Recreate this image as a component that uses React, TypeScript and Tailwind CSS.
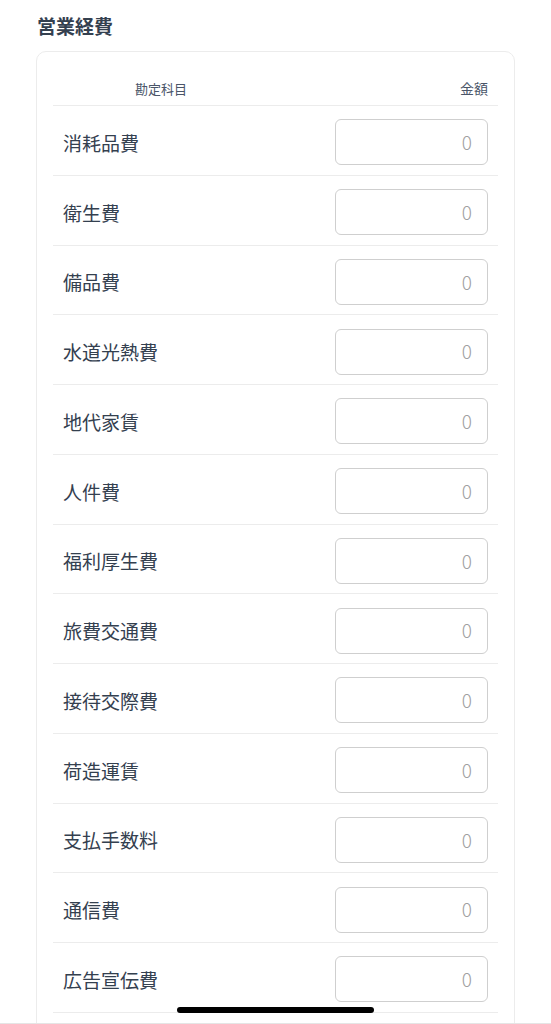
const items = [
  "消耗品費",
  "衛生費",
  "備品費",
  "水道光熱費",
  "地代家賃",
  "人件費",
  "福利厚生費",
  "旅費交通費",
  "接待交際費",
  "荷造運賃",
  "支払手数料",
  "通信費",
  "広告宣伝費",
];

export default function App() {
  return (
    <div
      className="relative h-[1024px] w-full overflow-hidden bg-white text-[#34404f]"
      style={{ fontFamily: '"Noto Sans CJK JP", "Noto Sans", sans-serif' }}
    >
      <h2 className="pl-[37px] pt-[12px] text-[19px] font-bold leading-[28px]">営業経費</h2>

      <div className="mx-[36px] mt-[11px] h-[1000px] rounded-t-[10px] border border-[#ececec] px-[16px]">
        <div className="flex h-[54px] items-center border-b border-[#ececec] pt-[20px] text-[13px] text-[#4a5568]">
          <span className="pl-[82px]">勘定科目</span>
          <span className="ml-auto pr-[10px] text-[14px]">金額</span>
        </div>

        {items.map((name) => (
          <div key={name} className="flex h-[69.75px] items-center border-b border-[#ececec] pl-[10px] pr-[10px] pt-[4px]">
            <span className="text-[19px] leading-none">{name}</span>
            <div className="ml-auto flex h-[46px] w-[153px] items-center justify-end rounded-[6px] border border-[#cfcfcf] pr-[15px] text-[19px] font-light text-[#a0a0a0]">
              0
            </div>
          </div>
        ))}
      </div>

      <div className="absolute left-0 right-0 top-[1023px] h-px bg-[#e5e5e5]" />
      <div className="absolute left-[177px] top-[1007px] h-[6px] w-[197px] rounded-full bg-black" />
    </div>
  );
}
